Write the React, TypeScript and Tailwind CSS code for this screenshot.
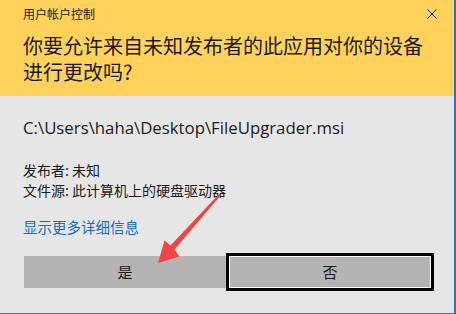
const CJK = '"Microsoft YaHei", "Noto Sans CJK SC", "Noto Sans", sans-serif';

function CloseIcon() {
  return (
    <svg viewBox="0 0 10 10" className="h-[10px] w-[10px]" fill="none" stroke="#1a1a1a" strokeWidth="1">
      <path d="M0.5 0.5L9.5 9.5M9.5 0.5L0.5 9.5" />
    </svg>
  );
}

// red annotation arrow drawn over the dialog
function Arrow() {
  return (
    <svg className="pointer-events-none absolute left-0 top-0" width="456" height="314" viewBox="0 0 456 314">
      <polygon
        points="221,195 174.5,249.5 179.5,256.5 158,263 164.5,240.5 170.5,245.5 219,194"
        fill="#f24444"
      />
    </svg>
  );
}

export default function App() {
  return (
    <div
      className="relative flex h-[314px] w-[456px] flex-col overflow-hidden border-b border-r-2 border-[#1979ca] bg-[#e6e6e6] text-[#1a1a1a]"
      style={{ fontFamily: CJK }}
    >
      <div className="flex h-[96px] shrink-0 flex-col bg-[#ffd35b] pl-[23px] pr-[17px]">
        <div className="flex h-[27px] items-center justify-between">
          <span className="text-[12px] leading-none">用户帐户控制</span>
          <CloseIcon />
        </div>
        <h1 className="mt-[6px] text-[20px] leading-[26px] font-normal">
          你要允许来自未知发布者的此应用对你的设备进行更改吗?
        </h1>
      </div>

      <div className="flex flex-1 flex-col pl-[23px]">
        <p className="mt-[22px] text-[16.8px] leading-[20px]" style={{ fontFamily: '"Open Sans", "Noto Sans", sans-serif' }}>
          C:\Users\haha\Desktop\FileUpgrader.msi
        </p>
        <div className="mt-[22px] flex flex-col text-[14px] leading-[20px]">
          <span>发布者: 未知</span>
          <span>文件源: 此计算机上的硬盘驱动器</span>
        </div>
        <span className="mt-[17px] text-[14.5px] leading-[20px] text-[#0a6fd0]">显示更多详细信息</span>

        <div className="mt-[16px] flex items-center">
          <button className="ml-px h-[32px] w-[202px] bg-[#b4b4b4] text-[15px]">是</button>
          <div className="h-[38px] w-[208px] border-[3px] border-black">
            <button className="h-full w-full border border-white bg-[#b4b4b4] text-[15px]">否</button>
          </div>
        </div>
      </div>

      <Arrow />
    </div>
  );
}
